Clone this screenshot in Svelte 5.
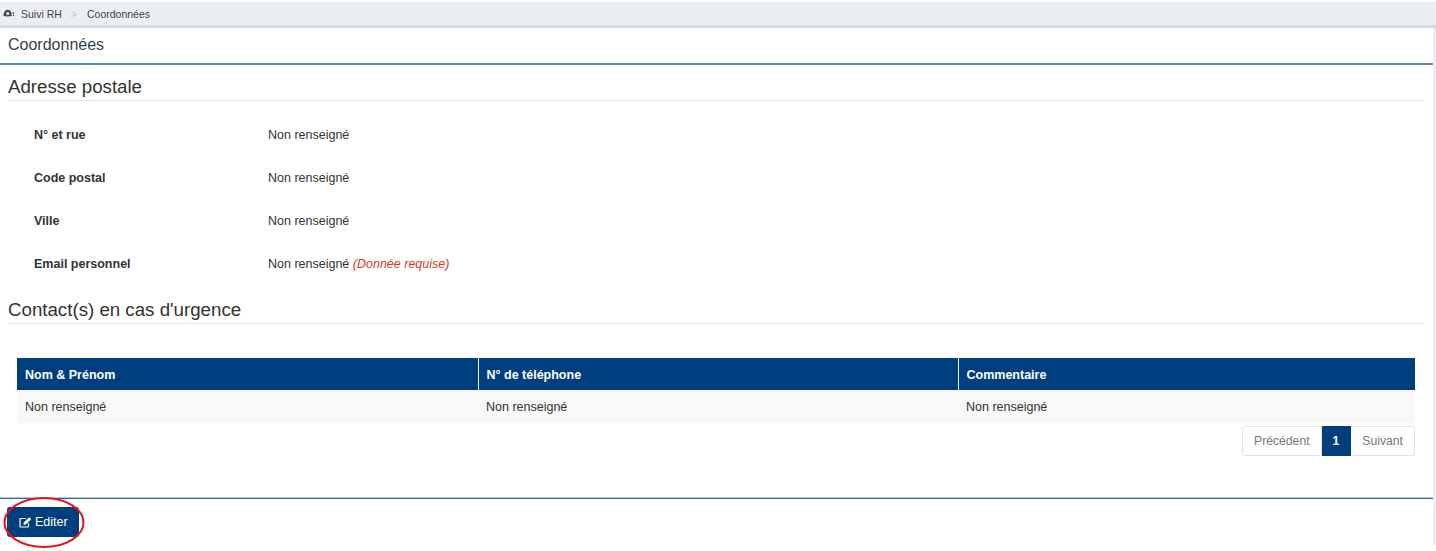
<script>
  const fields = [
    { label: "N° et rue", value: "Non renseigné" },
    { label: "Code postal", value: "Non renseigné" },
    { label: "Ville", value: "Non renseigné" },
    { label: "Email personnel", value: "Non renseigné", required: true }
  ];
  const columns = [
    { title: "Nom & Prénom", width: 461 },
    { title: "N° de téléphone", width: 480 },
    { title: "Commentaire", width: 457 }
  ];
</script>

<div class="page">
  <nav class="breadcrumb">
    <svg class="crumb-icon" width="12" height="8" viewBox="0 0 12 8" aria-hidden="true">
      <path d="M0.5 6.5 C0.5 3.5 2 0.8 4.8 0.8 C7.2 0.8 8.6 3 8.8 6.5 C8.8 7.3 6.5 7.4 4.6 7.4 C2.6 7.4 0.5 7.3 0.5 6.5Z" fill="#444b55" />
      <circle cx="4.7" cy="4.6" r="1.5" fill="#ebeef3" />
      <circle cx="10.2" cy="4" r="0.9" fill="#5a616b" />
      <circle cx="10.6" cy="6.4" r="0.8" fill="#5a616b" />
    </svg>
    <span>Suivi RH</span>
    <span class="sep">&gt;</span>
    <span>Coordonnées</span>
  </nav>

  <main class="content">
    <h1>Coordonnées</h1>

    <section class="address">
      <h2>Adresse postale</h2>
      <dl>
        {#each fields as field}
          <div class="row">
            <dt>{field.label}</dt>
            <dd>{field.value}{#if field.required}{" "}<em>(Donnée requise)</em>{/if}</dd>
          </div>
        {/each}
      </dl>
    </section>

    <section class="contacts">
      <h2>Contact(s) en cas d'urgence</h2>
      <div class="table-wrap">
        <table>
          <thead>
            <tr>
              {#each columns as col}
                <th style="width: {col.width}px">{col.title}</th>
              {/each}
            </tr>
          </thead>
          <tbody>
            <tr>
              {#each columns as col}
                <td>Non renseigné</td>
              {/each}
            </tr>
          </tbody>
        </table>
        <div class="pagination">
          <span class="page-link">Précédent</span>
          <span class="page-link current">1</span>
          <span class="page-link">Suivant</span>
        </div>
      </div>
    </section>

    <footer>
      <div class="edit-wrap">
        <button class="edit">
          <svg width="13" height="12" viewBox="0 0 13 12" aria-hidden="true">
            <path d="M9.5 7.2 V10 a1 1 0 0 1 -1 1 H2 a1 1 0 0 1 -1 -1 V3.5 a1 1 0 0 1 1 -1 H7" fill="none" stroke="#fff" stroke-width="1.2" />
            <path d="M4.8 6.6 L10.2 1.2 L12.2 3.2 L6.8 8.6 L4.6 8.9 Z" fill="#fff" />
          </svg>
          Editer
        </button>
        <svg class="circle" width="82" height="52" viewBox="0 0 82 52" aria-hidden="true">
          <ellipse cx="41" cy="25.5" rx="39.5" ry="24.5" fill="none" stroke="#e8141c" stroke-width="2" />
        </svg>
      </div>
    </footer>
  </main>
</div>

<style>
  :global(body) {
    margin: 0;
    background: #fff;
  }
  .page {
    height: 551px;
    overflow: hidden;
    padding-top: 2px;
    box-sizing: border-box;
    font-family: "Liberation Sans", Arial, sans-serif;
    font-size: 12.5px;
    color: #333;
  }
  .breadcrumb {
    height: 23px;
    display: flex;
    align-items: center;
    background: #ebeef3;
    border-bottom: 3px solid #d5d8dc;
    padding-left: 3px;
    font-size: 10.5px;
    color: #444;
  }
  .crumb-icon {
    margin-right: 6px;
    margin-top: -2px;
  }
  .sep {
    color: #c5c8cc;
    margin: 0 10px 0 9px;
  }
  .content {
    width: 1433px;
    height: 517px;
    background: #fff;
    border-right: 3px solid #ebeef3;
    display: flex;
    flex-direction: column;
  }
  h1 {
    margin: 0;
    height: 37px;
    padding: 8px 0 0 8px;
    box-sizing: border-box;
    border-bottom: 2px solid #5b82ab;
    font-size: 16px;
    line-height: 18px;
    font-weight: 400;
    color: #3a3f44;
  }
  h2 {
    margin: 0 9px 0 8px;
    font-size: 18.7px;
    line-height: 22px;
    font-weight: 400;
    color: #333;
    padding-bottom: 2px;
    border-bottom: 1px solid #e9e9e9;
  }
  .address {
    padding-top: 11px;
  }
  dl {
    margin: 0;
    padding: 12px 0 0 34px;
  }
  .row {
    display: flex;
    height: 43px;
    align-items: center;
  }
  dt {
    width: 234px;
    font-weight: 700;
  }
  dd {
    margin: 0;
  }
  em {
    color: #d9392b;
    font-style: italic;
  }
  .contacts {
    padding-top: 14px;
  }
  .table-wrap {
    padding: 34px 18px 0 17px;
  }
  table {
    width: 1398px;
    border-collapse: collapse;
    table-layout: fixed;
  }
  th {
    height: 32px;
    padding: 1px 8px 0;
    background: #003f7d;
    border-right: 1px solid #fff;
    color: #fff;
    text-align: left;
    box-sizing: border-box;
  }
  th:last-child {
    border-right: 0;
  }
  td {
    height: 33px;
    padding: 0 8px;
    background: #f8f8f8;
    box-sizing: border-box;
  }
  .pagination {
    display: flex;
    justify-content: flex-end;
    margin-top: 3px;
  }
  .page-link {
    height: 30px;
    display: flex;
    align-items: center;
    padding: 0 11px;
    border: 1px solid #e3e3e3;
    border-left: 0;
    color: #777;
    font-size: 12.2px;
    box-sizing: border-box;
  }
  .page-link:first-child {
    border-left: 1px solid #e3e3e3;
    border-radius: 3px 0 0 3px;
  }
  .page-link:last-child {
    border-radius: 0 3px 3px 0;
  }
  .page-link.current {
    background: #003f7d;
    border-color: #003f7d;
    color: #fff;
    font-weight: 700;
  }
  footer {
    margin-top: 42px;
    border-top: 1px solid #2e6496;
    box-shadow: 0 -1px 0 #b9cbdd;
    padding: 8px 0 0 7px;
  }
  .edit-wrap {
    position: relative;
    width: 72px;
  }
  .edit {
    display: flex;
    align-items: center;
    gap: 3px;
    width: 72px;
    height: 30px;
    padding: 0 0 0 12px;
    border: 0;
    border-radius: 3px;
    background: #003f7d;
    color: #fff;
    font-family: inherit;
    font-size: 12.5px;
  }
  .circle {
    position: absolute;
    left: -4px;
    top: -10px;
  }
</style>
